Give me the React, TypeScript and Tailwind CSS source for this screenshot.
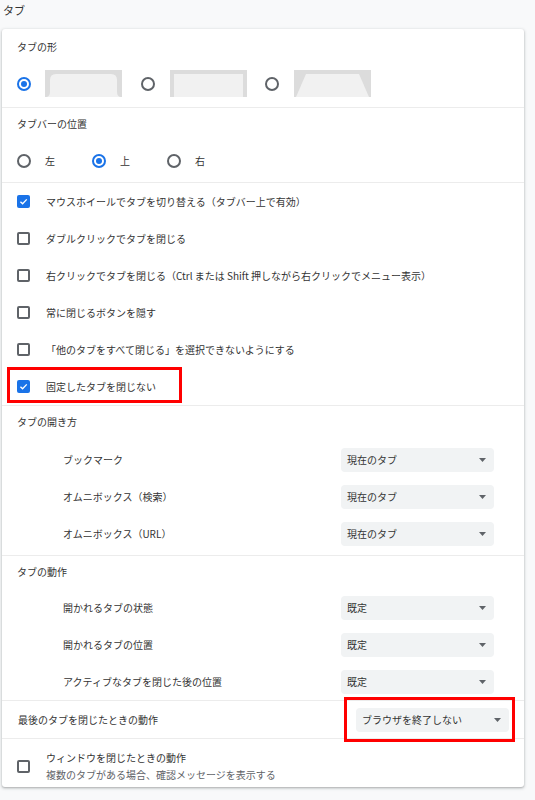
import React from "react";

const FONT = { fontFamily: '"Noto Sans CJK JP", "Noto Sans", sans-serif' };

function Radio({ checked }: { checked?: boolean }) {
  return checked ? (
    <span className="flex h-[14px] w-[14px] shrink-0 items-center justify-center rounded-full border-2 border-[#1a73e8]">
      <span className="block h-[6px] w-[6px] rounded-full bg-[#1a73e8]" />
    </span>
  ) : (
    <span className="block h-[14px] w-[14px] shrink-0 rounded-full border-2 border-[#5f6368]" />
  );
}

function Checkbox({ checked }: { checked?: boolean }) {
  return checked ? (
    <span className="flex h-[13px] w-[13px] shrink-0 items-center justify-center rounded-[2px] bg-[#1a73e8]">
      <svg width="9" height="9" viewBox="0 0 10 10">
        <path d="M1.6 5.2 L4 7.5 L8.6 2.6" fill="none" stroke="#fff" strokeWidth="1.5" />
      </svg>
    </span>
  ) : (
    <span className="block h-[13px] w-[13px] shrink-0 rounded-[2px] border-2 border-[#5f6368]" />
  );
}

function Arrow() {
  return (
    <svg width="7" height="4" viewBox="0 0 7 4" className="shrink-0">
      <path d="M0 0 L7 0 L3.5 4 Z" fill="#5f6368" />
    </svg>
  );
}

function Select({ value }: { value: string }) {
  return (
    <div className="flex h-[24px] w-[153px] items-center justify-between rounded-[4px] bg-[#f1f3f4] pl-[6px] pr-[8px] text-[10px] text-[#333]">
      <span>{value}</span>
      <Arrow />
    </div>
  );
}

function TabShape({ kind }: { kind: 1 | 2 | 3 }) {
  return (
    <svg width="77" height="27" viewBox="0 0 77 27" className="block shrink-0">
      <rect x="0" y="0" width="77" height="27" fill="#dcdcdc" />
      {kind === 1 && (
        <path
          d="M0 27 C4 27 5 25 5 21 L5 10 Q5 4 11 4 L66 4 Q72 4 72 10 L72 21 C72 25 73 27 77 27 Z"
          fill="#f1f1f1"
        />
      )}
      {kind === 2 && <rect x="4" y="4" width="69" height="23" fill="#f1f1f1" />}
      {kind === 3 && <path d="M2 27 L12 4 L65 4 L75 27 Z" fill="#f1f1f1" />}
    </svg>
  );
}

function CheckRow({ label, checked }: { label: string; checked?: boolean }) {
  return (
    <div className="flex h-[37px] items-center gap-[16px] pl-[15px]">
      <Checkbox checked={checked} />
      <span>{label}</span>
    </div>
  );
}

function SubRow({ label, value }: { label: string; value: string }) {
  return (
    <div className="flex h-[37px] items-center justify-between pl-[61px] pr-[30px]">
      <span>{label}</span>
      <Select value={value} />
    </div>
  );
}

export default function App() {
  return (
    <div
      className="relative h-[800px] w-[535px] overflow-hidden bg-[#f8f9fa] text-[10px] leading-[12px] text-[#333]"
      style={FONT}
    >
      <div className="h-[29px] pl-[3px] pt-[4px] text-[11px] leading-[13px]">タブ</div>

      <div className="ml-[2px] w-[522px] rounded-[3px] bg-white shadow-[0_1px_2px_rgba(60,64,67,0.3),0_1px_3px_1px_rgba(60,64,67,0.12)]">
        {/* タブの形 */}
        <div className="pb-[10px]">
          <div className="flex h-[35px] items-center pl-[15px]">タブの形</div>
          <div className="mt-[6px] flex h-[27px] items-center pl-[15px]">
            <Radio checked />
            <div className="ml-[14px]">
              <TabShape kind={1} />
            </div>
            <div className="ml-[19px]">
              <Radio />
            </div>
            <div className="ml-[15px]">
              <TabShape kind={2} />
            </div>
            <div className="ml-[18px]">
              <Radio />
            </div>
            <div className="ml-[15px]">
              <TabShape kind={3} />
            </div>
          </div>
        </div>

        {/* タブバーの位置 */}
        <div className="border-t border-[#ececec]">
          <div className="flex h-[32px] items-center pl-[15px]">タブバーの位置</div>
          <div className="flex h-[42px] items-center gap-[37px] pl-[15px]">
            <div className="flex items-center gap-[14px]">
              <Radio />
              <span>左</span>
            </div>
            <div className="flex items-center gap-[14px]">
              <Radio checked />
              <span>上</span>
            </div>
            <div className="flex items-center gap-[14px]">
              <Radio />
              <span>右</span>
            </div>
          </div>
        </div>

        {/* checkboxes */}
        <div className="border-t border-[#ececec]">
          <CheckRow checked label="マウスホイールでタブを切り替える（タブバー上で有効）" />
          <CheckRow label="ダブルクリックでタブを閉じる" />
          <CheckRow label="右クリックでタブを閉じる（Ctrl または Shift 押しながら右クリックでメニュー表示）" />
          <CheckRow label="常に閉じるボタンを隠す" />
          <CheckRow label="「他のタブをすべて閉じる」を選択できないようにする" />
          <CheckRow checked label="固定したタブを閉じない" />
        </div>

        {/* タブの開き方 */}
        <div className="border-t border-[#ececec] pb-[3px]">
          <div className="h-[35px] pl-[15px] pt-[10px]">タブの開き方</div>
          <SubRow label="ブックマーク" value="現在のタブ" />
          <SubRow label="オムニボックス（検索）" value="現在のタブ" />
          <SubRow label="オムニボックス（URL）" value="現在のタブ" />
        </div>

        {/* タブの動作 */}
        <div className="border-t border-[#ececec]">
          <div className="h-[33px] pl-[15px] pt-[10px]">タブの動作</div>
          <SubRow label="開かれるタブの状態" value="既定" />
          <SubRow label="開かれるタブの位置" value="既定" />
          <SubRow label="アクティブなタブを閉じた後の位置" value="既定" />
        </div>

        {/* 最後のタブ */}
        <div className="flex h-[38px] items-center justify-between border-t border-[#ececec] pl-[16px] pr-[15px]">
          <span>最後のタブを閉じたときの動作</span>
          <Select value="ブラウザを終了しない" />
        </div>

        {/* ウィンドウ */}
        <div className="flex h-[49px] items-center gap-[16px] border-t border-[#ececec] pl-[15px] pt-[6px]">
          <Checkbox />
          <div className="flex flex-col gap-[5px]">
            <span>ウィンドウを閉じたときの動作</span>
            <span className="text-[#5f6368]">複数のタブがある場合、確認メッセージを表示する</span>
          </div>
        </div>
      </div>

      {/* red annotation boxes */}
      <div className="absolute left-[7px] top-[367px] h-[36px] w-[175px] border-[3px] border-[#ff0000]" />
      <div className="absolute left-[344px] top-[697px] h-[45px] w-[171px] border-[3px] border-[#ff0000]" />
    </div>
  );
}
